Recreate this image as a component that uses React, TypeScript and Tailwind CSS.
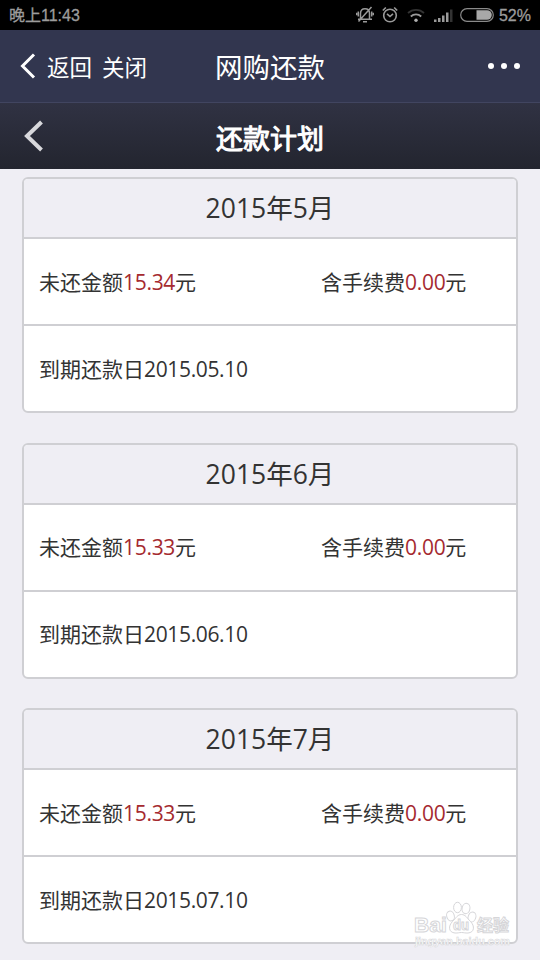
import React from 'react';

interface Plan {
  month: string;
  amount: string;
  fee: string;
  due: string;
}

const plans: Plan[] = [
  { month: '2015年5月', amount: '15.34', fee: '0.00', due: '2015.05.10' },
  { month: '2015年6月', amount: '15.33', fee: '0.00', due: '2015.06.10' },
  { month: '2015年7月', amount: '15.33', fee: '0.00', due: '2015.07.10' },
];

const StatusBar: React.FC = () => (
  <div className="flex h-[30px] items-center justify-between bg-black px-[9px] font-['Liberation_Sans','Noto_Sans_CJK_SC',sans-serif] text-[16px] text-[#9c9c9c] [-webkit-text-stroke:0.3px_#9c9c9c]">
    <span className="pt-px">晚上11:43</span>
    <div className="flex items-center">
      {/* Muted bell */}
      <svg width="18" height="18" viewBox="0 0 18 18" fill="none" stroke="#9a9a9a" strokeWidth="1.500" className="mr-[8px]">
        <path d="M4.500 13V7.500C4.500 4.500 6 2.800 9 2.800s4.500 1.700 4.500 4.700V13M2 13.300h14M7 15.700h4M2.300 5.500v5M.6 6.800v2.500M15.700 5.500v5M17.400 6.800v2.500M15.500 1L2.500 15.500" />
      </svg>
      {/* Alarm */}
      <svg width="16" height="18" viewBox="0 0 16 18" fill="none" stroke="#9a9a9a" strokeWidth="1.600" className="mr-[9px]">
        <circle cx="8" cy="9.500" r="6.300" />
        <path d="M5 7.800l3 2.700 3-2.700M.8 4.500l3-3M15.200 4.500l-3-3" />
      </svg>
      {/* Wifi */}
      <svg width="18" height="14" viewBox="0 0 18 14" fill="none" strokeWidth="1.800" className="mr-[9px]">
        <path d="M1 5c4.500-4.200 11.500-4.200 16 0" stroke="#333" />
        <path d="M3.800 8.500c3-2.800 7.400-2.800 10.400 0" stroke="#9a9a9a" />
        <circle cx="9" cy="12.200" r="1.700" fill="#b0b0b0" />
      </svg>
      {/* Signal */}
      <svg width="19" height="14" viewBox="0 0 19 14" fill="#9a9a9a" className="mr-[7px]">
        <path d="M0 11.500h2.500V14H0zM4 10h2.500v4H4zM8 7.500h2.500V14H8zM12 4.500h2.500V14H12z" />
        <path d="M16 1.500h2.500V14H16z" fill="#333" />
      </svg>
      {/* Battery */}
      <svg width="34" height="14" viewBox="0 0 34 14" className="mr-[5px]">
        <rect x=".7" y=".7" width="32.600" height="12.600" rx="6.300" fill="none" stroke="#8a8a8a" strokeWidth="1.200" />
        <path d="M16.500 2.200H27a4.800 4.800 0 0 1 0 9.600H16.500z" fill="#a8a8a8" />
      </svg>
      <span className="pt-px">52%</span>
    </div>
  </div>
);

const PlanCard: React.FC<{ plan: Plan }> = ({ plan }) => (
  <section className="h-[236px] overflow-hidden rounded-[6px] border-2 border-[#cfcfd3] bg-white text-[21px] text-[#333]">
    <h2 className="flex h-[60px] items-center justify-center border-b-2 border-[#cfcfd3] bg-[#efeef4] pt-[2px] text-[26.500px]">
      {plan.month}
    </h2>
    <div className="flex h-[87px] items-center border-b-2 border-[#cfcfd3] pt-[2px] pl-[15px]">
      <p className="w-[282px]">
        未还金额<span className="tracking-[-0.3px] text-[#a52a2f]">{plan.amount}</span>元
      </p>
      <p>
        含手续费<span className="tracking-[-0.3px] text-[#a52a2f]">{plan.fee}</span>元
      </p>
    </div>
    <p className="flex h-[85px] items-center pt-[2px] pl-[15px]">
      到期还款日<span className="tracking-[-0.35px]">{plan.due}</span>
    </p>
  </section>
);

// Baidu Jingyan badge in the lower right corner
const Watermark: React.FC = () => (
  <svg
    width="100"
    height="50"
    viewBox="0 0 100 50"
    className="absolute top-[901px] left-[413px]"
    fill="#fff"
    stroke="#d6d6d9"
    strokeWidth="1"
    fontFamily="'Liberation Sans','Noto Sans CJK SC',sans-serif"
    fontWeight="bold"
  >
    <text x="1" y="31" fontSize="21" textLength="33" lengthAdjust="spacingAndGlyphs">Bai</text>
    <ellipse cx="37.500" cy="15" rx="3.800" ry="5" transform="rotate(-15 37.500 15)" />
    <ellipse cx="44.500" cy="6.500" rx="3.900" ry="5.200" />
    <ellipse cx="53" cy="7.500" rx="3.900" ry="5.200" transform="rotate(12 53 7.500)" />
    <ellipse cx="59" cy="16" rx="3.800" ry="5" transform="rotate(20 59 16)" />
    <path d="M48.500 13.500c4 0 5.500 3.500 9 7 4.500 4.500 4 11-2.500 11.500-3 .2-4-.5-6.500-.5s-3.500.7-6.500.5c-6.500-.5-7-7-2.500-11.500 3.500-3.500 5-7 9-7z" />
    <text x="40" y="29" fontSize="14" textLength="16" lengthAdjust="spacingAndGlyphs">du</text>
    <text x="64" y="30" fontSize="16">经验</text>
    <text x="2" y="44" fontSize="10" strokeWidth=".5" textLength="95" lengthAdjust="spacingAndGlyphs">jingyan.baidu.com</text>
  </svg>
);

export default function App() {
  return (
    <div className="relative h-[960px] w-[540px] overflow-hidden bg-[#efeef4] font-['Open_Sans','Noto_Sans_CJK_SC',sans-serif]">
      <StatusBar />

      {/* App bar */}
      <header className="grid h-[72px] grid-cols-3 items-center bg-[#32364f] text-white">
        <div className="flex items-center pl-[20px] text-[22.500px]">
          <svg width="16" height="26" viewBox="0 0 16 26" fill="none" stroke="#fff" strokeWidth="3" className="mr-[11px]">
            <path d="M14 1.500L2.500 13 14 24.500" />
          </svg>
          <span className="mr-[10px] pt-[3px]">返回</span>
          <span className="pt-[3px]">关闭</span>
        </div>
        <h1 className="pt-[3px] text-center text-[27.500px]">网购还款</h1>
        <div className="flex justify-end gap-[7px] pr-[20px]">
          <i className="size-[6px] rounded-full bg-white" />
          <i className="size-[6px] rounded-full bg-white" />
          <i className="size-[6px] rounded-full bg-white" />
        </div>
      </header>

      {/* Page bar */}
      <div className="grid h-[67px] grid-cols-3 items-center border-t border-[#414560] bg-linear-to-b from-[#303243] to-[#23252f] text-white">
        <svg width="20" height="32" viewBox="0 0 20 32" fill="none" stroke="#d8d8dc" strokeWidth="4" className="ml-[24px]">
          <path d="M17.500 2L3 16l14.500 14" />
        </svg>
        <h1 className="pt-[7px] text-center text-[27px] [-webkit-text-stroke:1px_white]">还款计划</h1>
      </div>

      <main className="flex flex-col gap-[29.500px] px-[22px] pt-[8px]">
        {plans.map((plan) => (
          <PlanCard key={plan.month} plan={plan} />
        ))}
      </main>

      <Watermark />
    </div>
  );
}
